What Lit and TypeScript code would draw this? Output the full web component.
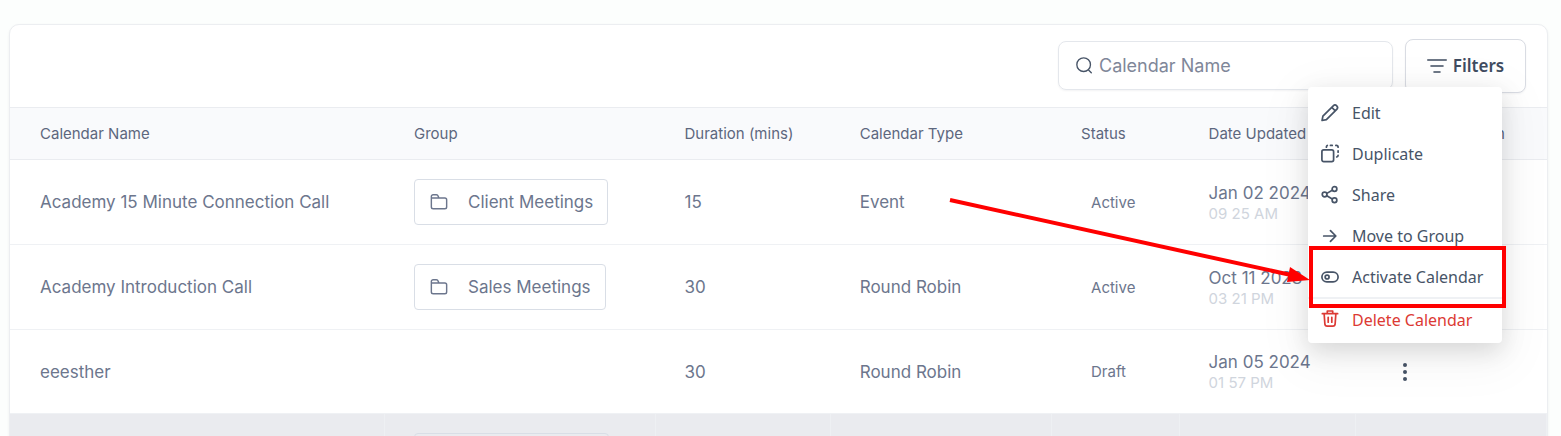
import { LitElement, html, css, svg, nothing } from "lit";
import { customElement, state } from "lit/decorators.js";
import { classMap } from "lit/directives/class-map.js";

interface Calendar {
  name: string;
  group: string;
  duration: string;
  type: string;
  status: string;
  date: string;
  time: string;
}

const calendars: Calendar[] = [
  { name: "Academy 15 Minute Connection Call", group: "Client Meetings", duration: "15", type: "Event", status: "Active", date: "Jan 02 2024", time: "09 25 AM" },
  { name: "Academy Introduction Call", group: "Sales Meetings", duration: "30", type: "Round Robin", status: "Active", date: "Oct 11 2023", time: "03 21 PM" },
  { name: "eeesther", group: "", duration: "30", type: "Round Robin", status: "Draft", date: "Jan 05 2024", time: "01 57 PM" },
];

const icons = {
  search: svg`<circle cx="9" cy="9" r="8"/><path d="M15 15.500l3 3"/>`,
  filter: svg`<path d="M.8 4h18.400M4 10h12M7 16h6"/>`,
  folder: svg`<path d="M1.500 15V4a2 2 0 0 1 2-2h3.500a2 2 0 0 1 2 1.500L10 5.500M1.500 5.500H16.500a2 2 0 0 1 2 2v8a2 2 0 0 1-2 2H3.500a2 2 0 0 1-2-2V5.500z"/>`,
  edit: svg`<path d="M1.200 18.300l.9-4.800L13.600 2a2.700 2.700 0 0 1 3.900 3.900L6 17.400zM12 3.700l3.900 3.900"/>`,
  duplicate: svg`<rect x="1" y="5.500" width="13" height="13" rx="2"/><path d="M6 2.500V2a2 2 0 0 1 1-1.500M10.500 .5h2M16.500 .5h.5a2 2 0 0 1 2 2M19 6.500v1.500M19 11.500a2 2 0 0 1-1.500 1.800"/>`,
  share: svg`<circle cx="4" cy="9.500" r="2.600"/><circle cx="15" cy="3.300" r="2.600"/><circle cx="15" cy="15.800" r="2.600"/><path d="M6.500 8.200l6-3.400M6.500 10.900l6 3.500"/>`,
  move: svg`<path d="M3 10h13M10.500 4l6 6-6 6"/>`,
  toggle: svg`<rect x="1" y="4.500" width="18" height="11" rx="5.500"/><circle cx="6.800" cy="10" r="2.200"/>`,
  trash: svg`<path d="M1.500 3h17M7 2.500V0h6v2.500M3.500 3l.8 11.500a2.500 2.500 0 0 0 2.500 2.300h6.400a2.500 2.500 0 0 0 2.500-2.300L16.500 3M8 7v5.500M12 7v5.500"/>`,
};

const icon = (name: keyof typeof icons) =>
  html`<svg class="icon" viewBox="0 0 20 20" aria-hidden="true">${icons[name]}</svg>`;

@customElement("calendar-menu")
export class CalendarMenu extends LitElement {
  static styles = css`
    :host {
      display: block;
      box-sizing: border-box;
      width: 194px;
      padding: 5px 0 3px;
      border-radius: 4px;
      background: #fff;
      box-shadow: 0 8px 24px rgba(0, 0, 0, 0.13), 0 12px 48px 12px rgba(0, 0, 0, 0.04);
      font: 16px/20px "Noto Sans", sans-serif;
    }
    .item {
      display: flex;
      align-items: center;
      gap: 13px;
      width: 100%;
      height: 41px;
      padding: 0 13px;
      border: 0;
      background: none;
      color: #475467;
      font: inherit;
      white-space: nowrap;
      cursor: pointer;
    }
    .danger {
      color: #dc3a34;
      border-top: 2px solid #eff1f4;
      height: 43px;
    }
    .icon {
      flex: none;
      overflow: visible;
      width: 18px;
      height: 18px;
      fill: none;
      stroke: currentColor;
      stroke-width: 1.9;
      stroke-linecap: round;
      stroke-linejoin: round;
    }
  `;

  render() {
    return html`
      <button class="item" role="menuitem">${icon("edit")}Edit</button>
      <button class="item" role="menuitem">${icon("duplicate")}Duplicate</button>
      <button class="item" role="menuitem">${icon("share")}Share</button>
      <button class="item" role="menuitem">${icon("move")}Move to Group</button>
      <button class="item" role="menuitem">${icon("toggle")}Activate Calendar</button>
      <button class="item danger" role="menuitem">${icon("trash")}Delete Calendar</button>
    `;
  }
}

@customElement("app-root")
export class AppRoot extends LitElement {
  @state() private query = "";

  static styles = css`
    :host {
      display: block;
      box-sizing: border-box;
      height: 100vh;
      overflow: hidden;
      padding: 24px 13px 0 9px;
      background: #fcfefd;
      color: #6c768d;
      font: 17px/24px Inter, sans-serif;
    }
    .card {
      position: relative;
      border: 1px solid #eceef1;
      border-radius: 10px;
      background: #fff;
      box-shadow: 0 1px 3px rgba(16, 24, 40, 0.06);
    }
    .toolbar {
      display: flex;
      justify-content: flex-end;
      align-items: flex-start;
      gap: 12px;
      padding: 14px 21px;
    }
    .search {
      display: flex;
      align-items: center;
      gap: 6px;
      box-sizing: border-box;
      width: 335px;
      height: 49px;
      margin-top: 2px;
      padding: 0 17px;
      border: 1px solid #e4e7ec;
      border-radius: 8px;
      box-shadow: 0 1px 2px rgba(16, 24, 40, 0.05);
    }
    .input {
      flex: 1;
      min-width: 0;
      padding: 0;
      border: 0;
      outline: 0;
      background: none;
      color: #667085;
      font: 18px/24px Inter, sans-serif;
    }
    .input::placeholder {
      color: #7f8799;
      opacity: 1;
    }
    .filters {
      display: flex;
      align-items: center;
      justify-content: center;
      gap: 6px;
      box-sizing: border-box;
      width: 121px;
      height: 54px;
      padding: 0;
      border: 1px solid #d9dce3;
      border-radius: 8px;
      background: #fff;
      box-shadow: 0 1px 2px rgba(16, 24, 40, 0.05);
      color: #3f4c60;
      font: 600 17px/24px "Noto Sans", sans-serif;
    }
    .icon {
      flex: none;
      overflow: visible;
      width: 20px;
      height: 20px;
      fill: none;
      stroke: currentColor;
      stroke-width: 1.6;
      stroke-linecap: round;
      stroke-linejoin: round;
    }
    .search .icon {
      width: 17px;
      height: 17px;
      color: #475467;
    }
    .chip .icon {
      width: 20px;
      height: 18px;
    }
    .table {
      width: 100%;
      table-layout: fixed;
      border-collapse: separate;
      border-spacing: 0;
    }
    .name { width: 24.4%; }
    .group { width: 17.6%; }
    .duration { width: 11.4%; }
    .type { width: 14.4%; }
    .status { width: 8.3%; }
    .updated { width: 11.5%; }
    .head {
      box-sizing: border-box;
      height: 53px;
      padding: 0 0 0 29px;
      border-top: 1px solid #eaecf0;
      border-bottom: 1px solid #eaecf0;
      background: #f9fafc;
      text-align: left;
      font-size: 15px;
      font-weight: 400;
      color: #5d677e;
      white-space: nowrap;
    }
    .head:first-child,
    .cell:first-child {
      padding-left: 30px;
    }
    .head:last-child {
      padding-right: 42px;
      text-align: right;
    }
    .cell {
      box-sizing: border-box;
      height: 84px;
      padding: 19px 0 19px 29px;
      border-bottom: 1px solid #eff1f4;
      white-space: nowrap;
    }
    .hovered .cell {
      background: #eaebef;
      border-right: 1px solid #eef0f3;
    }
    .chip {
      display: flex;
      align-items: center;
      gap: 19px;
      box-sizing: border-box;
      width: max-content;
      height: 46px;
      padding: 0 14px;
      border: 1px solid #d9dee6;
      border-radius: 4px;
      background: none;
      color: inherit;
      font: inherit;
    }
    .blank {
      width: 195px;
    }
    .state {
      padding-left: 10px;
      font-size: 15px;
    }
    .date {
      display: block;
      padding-top: 1px;
      line-height: 22px;
    }
    .time {
      display: block;
      color: #d0d5dd;
      font-size: 15px;
      line-height: 20px;
    }
    .more {
      display: flex;
      width: 40px;
      height: 40px;
      padding: 0;
      align-items: center;
      justify-content: center;
      border: 0;
      background: none;
      color: #475467;
    }
    .more .icon {
      fill: currentColor;
      stroke: none;
    }
    .menu {
      position: absolute;
      top: 62px;
      right: 45px;
    }
    .callout {
      position: absolute;
      top: 166px;
      right: 41px;
      width: 560px;
      height: 120px;
      pointer-events: none;
    }
  `;

  private renderRow(c: Calendar) {
    return html`
      <tr>
        <td class="cell">${c.name}</td>
        <td class="cell">
          ${c.group ? html`<button class="chip">${icon("folder")}<span>${c.group}</span></button>` : nothing}
        </td>
        <td class="cell">${c.duration}</td>
        <td class="cell">${c.type}</td>
        <td class="cell"><span class="state">${c.status}</span></td>
        <td class="cell"><span class="date">${c.date}</span><span class="time">${c.time}</span></td>
        <td class="cell">
          <button class="more" aria-label="Actions">
            <svg class="icon" viewBox="0 0 20 20" aria-hidden="true">
              <circle cx="10" cy="3" r="2" /><circle cx="10" cy="10" r="2" /><circle cx="10" cy="17" r="2" />
            </svg>
          </button>
        </td>
      </tr>
    `;
  }

  render() {
    return html`
      <main class="card">
        <div class="toolbar">
          <label class="search">
            ${icon("search")}
            <input
              class="input"
              type="text"
              aria-label="Calendar Name"
              placeholder="Calendar Name"
              .value=${this.query}
              @input=${(e: Event) => (this.query = (e.target as HTMLInputElement).value)}
            />
          </label>
          <button class="filters">${icon("filter")}Filters</button>
        </div>
        <table class="table">
          <thead>
            <tr>
              <th class="head name">Calendar Name</th>
              <th class="head group">Group</th>
              <th class="head duration">Duration (mins)</th>
              <th class="head type">Calendar Type</th>
              <th class="head status">Status</th>
              <th class="head updated">Date Updated</th>
              <th class="head">Action</th>
            </tr>
          </thead>
          <tbody>
            ${calendars.map((c) => this.renderRow(c))}
            <tr class=${classMap({ hovered: true })}>
              <td class="cell"></td>
              <td class="cell"><div class="chip blank"></div></td>
              <td class="cell"></td>
              <td class="cell"></td>
              <td class="cell"></td>
              <td class="cell"></td>
              <td class="cell"></td>
            </tr>
          </tbody>
        </table>
        <calendar-menu class="menu" role="menu"></calendar-menu>
        <svg class="callout" viewBox="0 0 560 120" aria-hidden="true">
          <path d="M4 9L345 84" stroke="#f00" stroke-width="4" />
          <path d="M344 76L364 89L341 91z" fill="#f00" />
          <rect x="365" y="57" width="193" height="58" fill="none" stroke="#f00" stroke-width="4" />
        </svg>
      </main>
    `;
  }
}
